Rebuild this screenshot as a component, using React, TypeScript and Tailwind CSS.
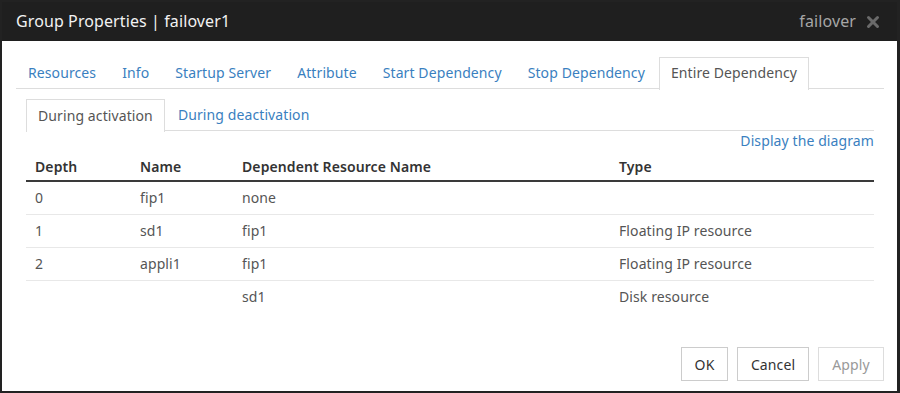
import { X } from 'lucide-react';

const tabs = ['Resources', 'Info', 'Startup Server', 'Attribute', 'Start Dependency', 'Stop Dependency', 'Entire Dependency'];

const rows = [
  { depth: '0', name: 'fip1', dep: 'none', type: '' },
  { depth: '1', name: 'sd1', dep: 'fip1', type: 'Floating IP resource' },
  { depth: '2', name: 'appli1', dep: 'fip1', type: 'Floating IP resource' },
  { depth: '', name: '', dep: 'sd1', type: 'Disk resource' },
];

export default function App() {
  return (
    <div className="w-[900px] h-[393px] bg-white border-t-2 border-l-2 border-r-[3px] border-b-2 border-[#222222] flex flex-col font-['Noto_Sans',sans-serif] text-[14px] tracking-[0.1px] text-[#555555]">
      {/* Title bar */}
      <div className="h-[39px] bg-[#1f1f1f] flex items-center justify-between pl-[14px] pr-[15px] shrink-0">
        <span className="text-[16px] text-[#f2f2f2] pb-[2px]">Group Properties | failover1</span>
        <div className="flex items-center gap-[8px]">
          <span className="text-[16px] text-[#a6a6a6] pb-[2px]">failover</span>
          <X className="w-[18px] h-[18px] text-[#6a6a6a]" strokeWidth={4} />
        </div>
      </div>

      <div className="flex-1 flex flex-col pt-[16px] pl-[14px] pr-[13px] pb-[10px]">
        {/* Main tabs */}
        <div className="flex border-b border-[#dddddd] h-[32px]">
          {tabs.map((t) => {
            const active = t === 'Entire Dependency';
            return (
              <div
                key={t}
                className={`h-[32px] px-[11px] mr-[2px] pb-[3px] flex items-center border border-b-0 ${
                  active ? 'border-[#dddddd] bg-white text-[#555555] -mb-px h-[33px]' : 'border-transparent text-[#3a7fc0]'
                }`}
              >
                {t}
              </div>
            );
          })}
        </div>

        <div className="px-[10px] flex flex-col flex-1">
          {/* Sub tabs */}
          <div className="flex border-b border-[#dddddd] h-[32px] mt-[10px]">
            <div className="h-[33px] -mb-px px-[11px] mr-[2px] pb-[2px] flex items-center border border-b-0 border-[#dddddd] bg-white text-[#555555]">
              During activation
            </div>
            <div className="h-[32px] px-[11px] pb-[2px] flex items-center text-[#3a7fc0]">During deactivation</div>
          </div>

          <div className="flex justify-end h-[19px] items-center pb-[2px] mt-[1px] text-[#3a7fc0]">Display the diagram</div>

          {/* Table */}
          <div>
            <div className="flex h-[31px] items-center border-b-2 border-[#3a3a3a] font-semibold text-[#333333] pt-[1px]">
              <div className="w-[105px] pl-[9px]">Depth</div>
              <div className="w-[102px] pl-[9px]">Name</div>
              <div className="w-[377px] pl-[9px]">Dependent Resource Name</div>
              <div className="flex-1 pl-[9px]">Type</div>
            </div>
            {rows.map((r, i) => (
              <div
                key={i}
                className={`flex h-[33px] items-center pb-[2px] ${i < rows.length - 1 ? 'border-b border-[#e8e8e8]' : ''}`}
              >
                <div className="w-[105px] pl-[9px]">{r.depth}</div>
                <div className="w-[102px] pl-[9px]">{r.name}</div>
                <div className="w-[377px] pl-[9px]">{r.dep}</div>
                <div className="flex-1 pl-[9px]">{r.type}</div>
              </div>
            ))}
          </div>

          <div className="flex-1" />
        </div>

        {/* Buttons */}
        <div className="flex justify-end gap-[9px]">
          <button className="h-[34px] w-[47px] border border-[#cccccc] bg-white text-[#333333]">OK</button>
          <button className="h-[34px] w-[72px] border border-[#cccccc] bg-white text-[#333333]">Cancel</button>
          <button className="h-[34px] w-[66px] border border-[#dddddd] bg-white text-[#999999]">Apply</button>
        </div>
      </div>
    </div>
  );
}
